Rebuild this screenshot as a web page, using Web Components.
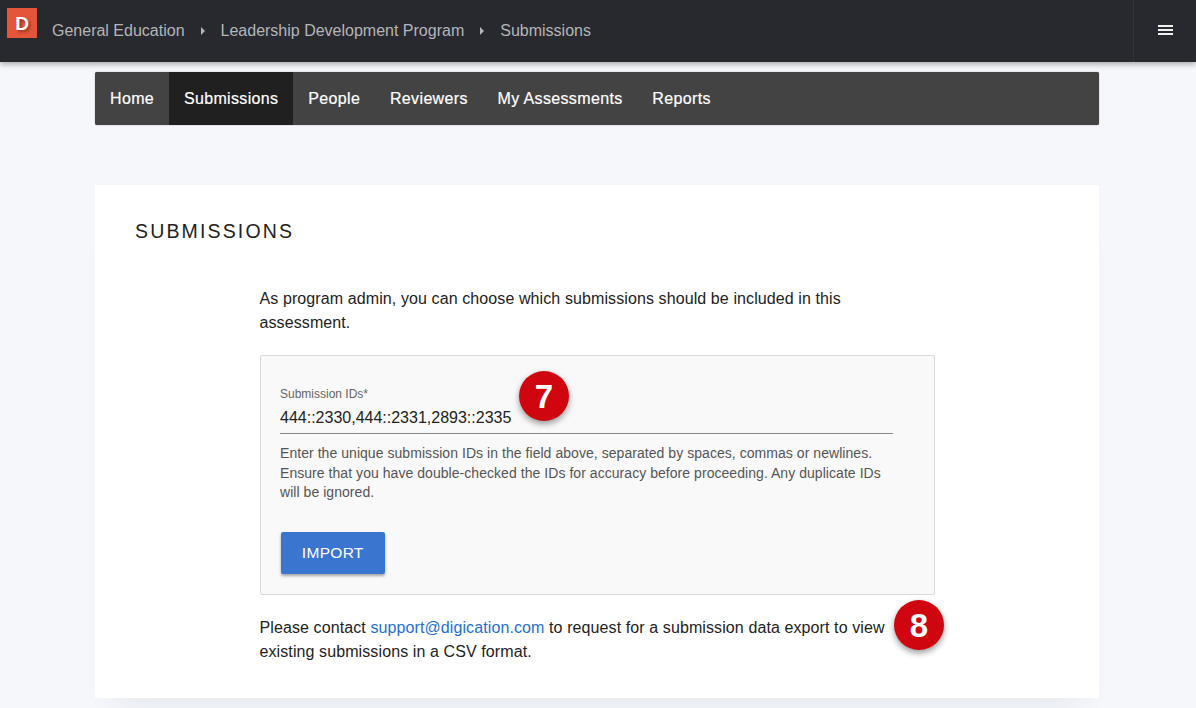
<!DOCTYPE html>
<html lang="en"><head><meta charset="utf-8"><title>Submissions</title>
<style>
html,body{margin:0;height:708px;overflow:hidden;background:#f5f7fb;font-family:"Liberation Sans",Arial,sans-serif;}
body{display:flex;flex-direction:column;}
</style></head><body>
<app-topbar>
  <bar-crumb>General Education</bar-crumb>
  <bar-crumb>Leadership Development Program</bar-crumb>
  <bar-crumb last>Submissions</bar-crumb>
</app-topbar>
<app-nav>
  <nav-tab>Home</nav-tab><nav-tab active>Submissions</nav-tab><nav-tab>People</nav-tab><nav-tab>Reviewers</nav-tab><nav-tab>My Assessments</nav-tab><nav-tab>Reports</nav-tab>
</app-nav>
<app-card>
  <span slot="title">SUBMISSIONS</span>
  <p style="width:630px">As program admin, you can choose which submissions should be included in this assessment.</p>
  <import-box></import-box>
  <p class="after" style="width:630px"><span>Please contact </span><a href="#" style="color:#1d6fd1;text-decoration:none">support@digication.com</a><span> to request for a submission data export to view</span> <span>existing submissions in a CSV format.</span><step-badge style="left:634.5px;top:-16px" n="8"></step-badge></p>
</app-card>
<script>
function def(name,html,init){customElements.define(name,class extends HTMLElement{constructor(){super();const r=this.attachShadow({mode:'open'});r.innerHTML=html;if(init)init(this,r);}connectedCallback(){if(this._c)this._c();}});}
def('app-topbar',`<style>
:host{display:flex;align-items:stretch;height:62px;flex:none;background:#28292e;box-shadow:0 2px 6px rgba(0,0,0,.35);position:relative;z-index:2;color:#b4b5b8}
.logo{flex:none;width:30px;height:30px;margin:8px 15px 0 7px;background:#e4553a;display:flex;align-items:center;justify-content:center;color:#fff;font:700 19px/1 "Liberation Sans",sans-serif;text-shadow:2px 2px 3px rgba(100,20,0,.55)}
.crumbs{flex:1;display:flex;align-items:center;padding-bottom:1px}
.menu{flex:none;width:63px;border-left:1px solid #333439;display:flex;align-items:center;justify-content:center;box-sizing:border-box;padding-bottom:2px}
svg{display:block}
</style><div class="logo">D</div><div class="crumbs"><slot></slot></div>
<div class="menu"><svg width="15" height="10" viewBox="0 0 15 10" fill="#f0f0f0"><rect width="15" height="2"/><rect y="4" width="15" height="2"/><rect y="8" width="15" height="2"/></svg></div>`);
def('bar-crumb',`<style>
:host{display:inline-flex;align-items:center;font-size:16px;color:#b4b5b8}
svg{margin:0 15px}
</style><slot></slot><svg id="s" width="6" height="8" viewBox="0 0 6 8"><path d="M1 0l4 4-4 4z" fill="#b4b5b8"/></svg>`,(h,r)=>{h._c=()=>{if(h.hasAttribute('last'))r.getElementById('s').style.display='none';};});
def('app-nav',`<style>
:host{display:flex;flex:none;height:53px;margin:10px 97px 0 95px;background:#434343;border-radius:2px;box-shadow:0 0 1px rgba(0,0,0,.7)}
</style><slot></slot>`);
def('nav-tab',`<style>
:host{display:flex;align-items:center;padding:0 14.8px 0 15px;font-size:16px;letter-spacing:.35px;color:#fff;-webkit-text-stroke:.2px #fff}
:host([active]){background:#202020}
</style><slot></slot>`);
def('app-card',`<style>
:host{display:block;flex:none;height:513px;box-sizing:border-box;margin:60px 97px 0 95px;background:#fff;padding:34px 40px 0;box-shadow:0 30px 30px -20px rgba(40,50,90,.07);position:relative;}
h1{margin:0 0 44px;font-size:19.5px;line-height:24px;font-weight:400;letter-spacing:2.15px;color:#222}
.body{margin:0 0 0 124.5px;width:675px;font-size:16px;line-height:24px;color:#222;letter-spacing:.1px}
::slotted(p){margin:0;position:relative}
::slotted(p.after){margin-top:21px}
::slotted(import-box){margin-top:20px}
</style><h1><slot name="title"></slot></h1><div class="body"><slot></slot></div>`);
def('import-box',`<style>
:host{display:block;box-sizing:border-box;height:240px;width:675px;letter-spacing:0;background:#f9f9f9;border:1px solid #d8d8d8;border-radius:2px;padding:30px 40.5px 0 19.5px;position:relative}
label{display:block;font-size:12px;line-height:16px;color:#666}
.v{font-size:16px;line-height:24px;color:#222;border-bottom:1px solid #8a8a8a;height:28px;box-sizing:border-box;margin-top:4px}
.help{font-size:14px;line-height:19.7px;color:#555;margin-top:10px;letter-spacing:.05px}
button{display:block;margin:29px 0 0 .5px;width:104.5px;height:42px;background:#3a75cf;color:#fff;border:0;border-radius:2px;font:400 15.5px "Liberation Sans",sans-serif;letter-spacing:.3px;box-shadow:0 2px 3px rgba(0,0,0,.35);padding:0}
</style><label>Submission IDs*</label><div class="v">444::2330,444::2331,2893::2335</div>
<div class="help">Enter the unique submission IDs in the field above, separated by spaces, commas or newlines. Ensure that you have double-checked the IDs for accuracy before proceeding. Any duplicate IDs will be ignored.</div>
<button>IMPORT</button><step-badge n="7" style="left:258.5px;top:15px"></step-badge>`);
def('step-badge',`<style>
:host{position:absolute;display:flex;align-items:center;justify-content:center;width:50px;height:50px;border-radius:50%;background:#cf0510;box-shadow:0 3px 6px rgba(0,0,0,.4);color:#fff;font:700 33px/1 "Liberation Sans",sans-serif;letter-spacing:0}
</style><span id="n"></span>`,(h,r)=>{h._c=()=>{r.getElementById('n').textContent=h.getAttribute('n');};});
</script>
</body></html>
